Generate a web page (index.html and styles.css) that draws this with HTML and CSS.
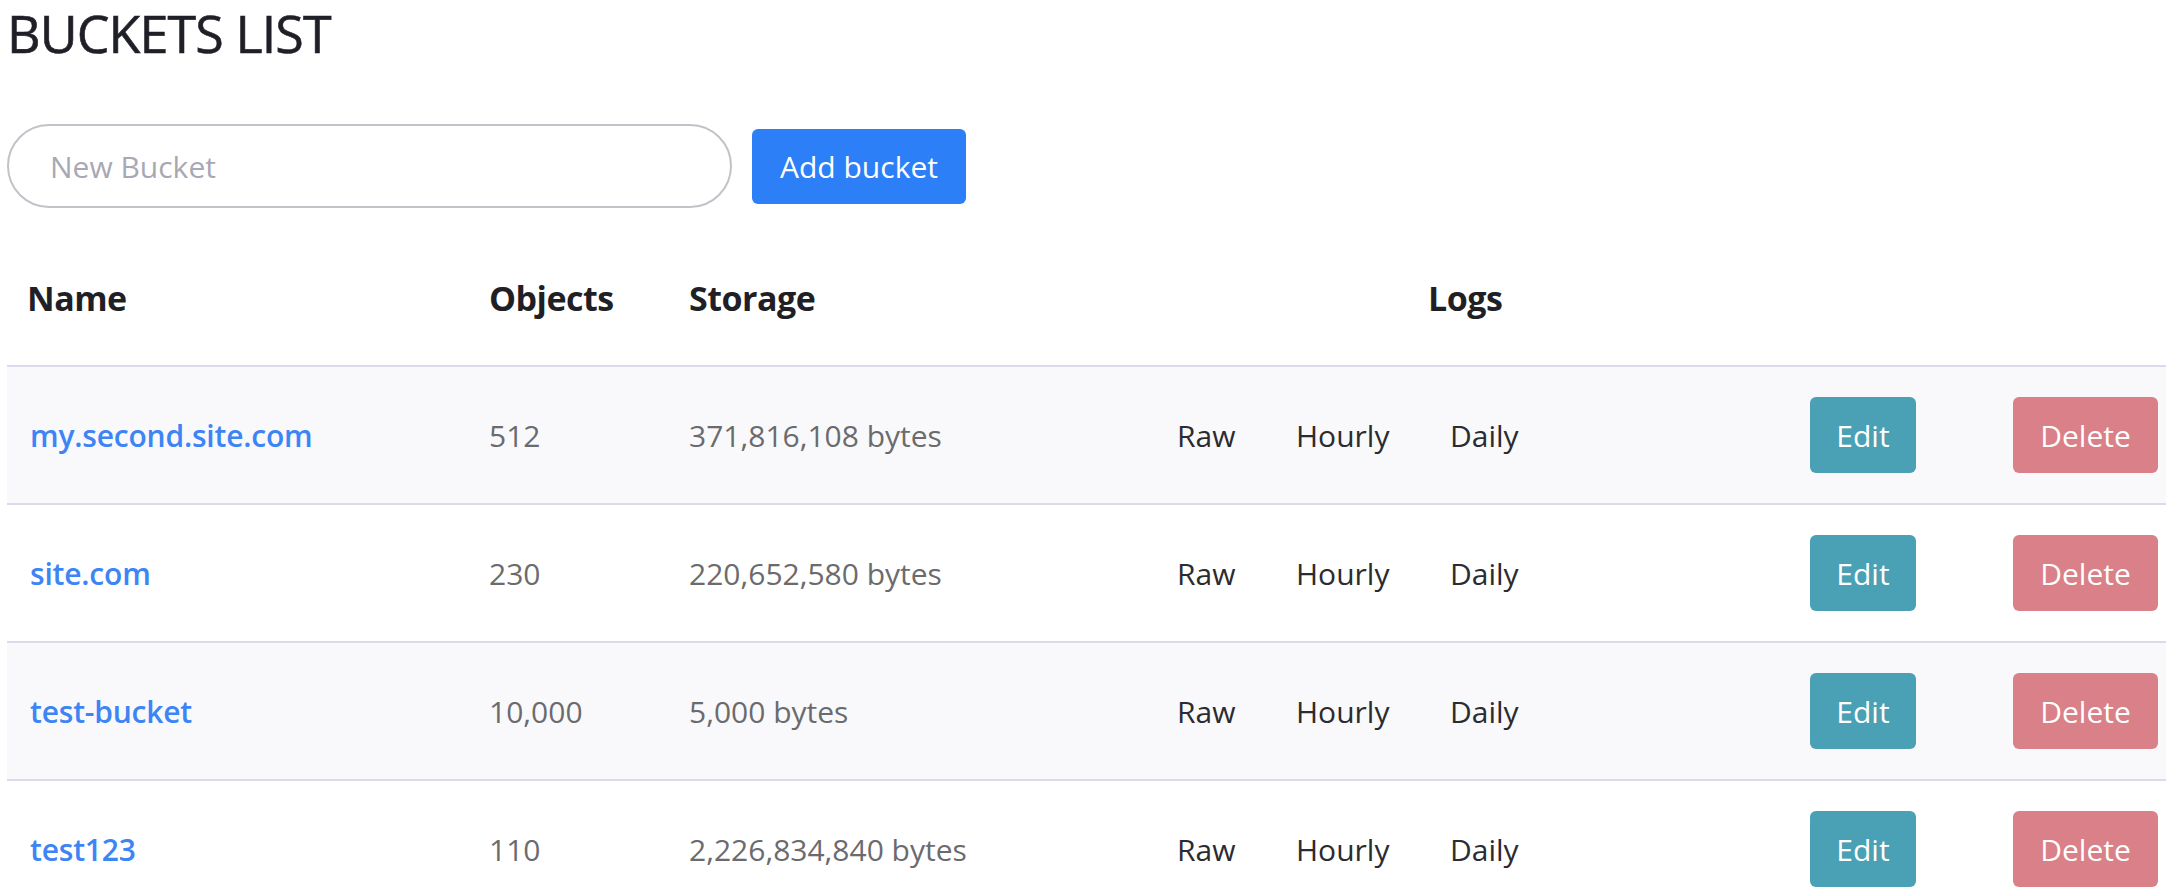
FILE: index.html
```html
<!DOCTYPE html>
<html lang="en">
<head>
<meta charset="utf-8">
<title>Buckets List</title>
<link rel="stylesheet" href="styles.css">
</head>
<body>
<main class="page">
  <h1 class="title">BUCKETS LIST</h1>
  <form class="add-form">
    <input class="bucket-input" type="text" placeholder="New Bucket">
    <button class="btn btn-primary" type="button">Add bucket</button>
  </form>
  <div class="table">
    <div class="head-row">
      <div class="th th-first">Name</div>
      <div class="th">Objects</div>
      <div class="th">Storage</div>
      <div class="th">Logs</div>
    </div>
    <div class="row striped">
      <div class="td td-first"><a class="bucket-link" href="#">my.second.site.com</a></div>
      <div class="td muted">512</div>
      <div class="td muted">371,816,108 bytes</div>
      <div class="td log">Raw</div>
      <div class="td log">Hourly</div>
      <div class="td log">Daily</div>
      <div class="td"><button class="btn btn-edit" type="button">Edit</button></div>
      <div class="td"><button class="btn btn-delete" type="button">Delete</button></div>
    </div>
    <div class="row">
      <div class="td td-first"><a class="bucket-link" href="#">site.com</a></div>
      <div class="td muted">230</div>
      <div class="td muted">220,652,580 bytes</div>
      <div class="td log">Raw</div>
      <div class="td log">Hourly</div>
      <div class="td log">Daily</div>
      <div class="td"><button class="btn btn-edit" type="button">Edit</button></div>
      <div class="td"><button class="btn btn-delete" type="button">Delete</button></div>
    </div>
    <div class="row striped">
      <div class="td td-first"><a class="bucket-link" href="#">test-bucket</a></div>
      <div class="td muted">10,000</div>
      <div class="td muted">5,000 bytes</div>
      <div class="td log">Raw</div>
      <div class="td log">Hourly</div>
      <div class="td log">Daily</div>
      <div class="td"><button class="btn btn-edit" type="button">Edit</button></div>
      <div class="td"><button class="btn btn-delete" type="button">Delete</button></div>
    </div>
    <div class="row">
      <div class="td td-first"><a class="bucket-link" href="#">test123</a></div>
      <div class="td muted">110</div>
      <div class="td muted">2,226,834,840 bytes</div>
      <div class="td log">Raw</div>
      <div class="td log">Hourly</div>
      <div class="td log">Daily</div>
      <div class="td"><button class="btn btn-edit" type="button">Edit</button></div>
      <div class="td"><button class="btn btn-delete" type="button">Delete</button></div>
    </div>
  </div>
</main>
</body>
</html>
```
FILE: styles.css
```css
html, body {
  margin: 0;
  padding: 0;
  overflow: hidden;
  background: #ffffff;
}

body {
  font-family: "Open Sans", "Noto Sans", sans-serif;
  color: #212529;
}

.page {
  padding: 1px 0 0 7px;
}

.title {
  margin: 0;
  font-size: 52px;
  line-height: 64px;
  font-weight: 400;
  letter-spacing: -0.9px;
  color: #1f1f27;
  padding-left: 0;
  -webkit-text-stroke: 0.6px #1f1f27;
}

.add-form {
  display: flex;
  align-items: center;
  gap: 20px;
  margin: 59px 0 0 0;
}

.bucket-input {
  box-sizing: border-box;
  width: 725px;
  height: 84px;
  border: 2px solid #c2c2c9;
  border-radius: 42px;
  padding: 0 0 0 41px;
  font-family: "Open Sans", "Noto Sans", sans-serif;
  font-size: 30px;
  color: #333;
  outline: none;
  background: #fff;
}

.bucket-input::placeholder {
  color: #a8a8b4;
}

.btn {
  box-sizing: border-box;
  display: inline-flex;
  align-items: center;
  justify-content: center;
  border: none;
  border-radius: 6px;
  font-family: "Open Sans", "Noto Sans", sans-serif;
  font-size: 30px;
  color: #ffffff;
  cursor: pointer;
  padding: 0 27px;
}

.btn-primary {
  height: 75px;
  width: 214px;
  background: #2d7ff7;
}

.btn-edit {
  height: 76px;
  width: 106px;
  padding: 0;
  background: #4aa0b4;
}

.btn-delete {
  height: 76px;
  width: 145px;
  padding: 0;
  background: #d98088;
}

.table {
  margin-top: 22px;
  width: 2159px;
}

.head-row {
  display: grid;
  grid-template-columns: 482px 200px 739px 1fr;
  align-items: center;
  height: 135px;
}

.th {
  font-size: 34px;
  font-weight: 700;
  color: #1f1f25;
  letter-spacing: -0.5px;
}

.th-first {
  padding-left: 20px;
}

.row {
  box-sizing: border-box;
  display: grid;
  grid-template-columns: 482px 200px 488px 119px 154px 360px 203px 153px;
  align-items: center;
  height: 138px;
  border-top: 2px solid #dcd9ee;
}

.row.striped {
  background: #f9f9fc;
}

.td {
  font-size: 30px;
  display: flex;
  align-items: center;
}

.td-first {
  padding-left: 23px;
}

.bucket-link {
  color: #3d85f4;
  font-weight: 600;
  text-decoration: none;
  letter-spacing: -0.2px;
}

.muted {
  color: #6b6b6e;
}

.log {
  color: #2b2b30;
}
```
